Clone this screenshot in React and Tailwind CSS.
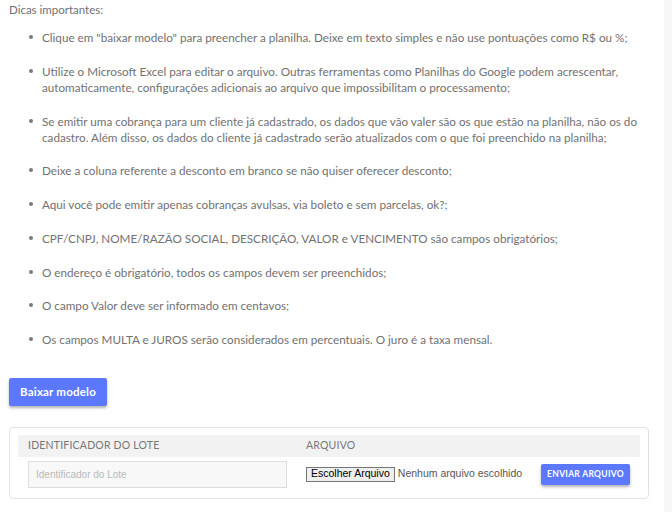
import React from 'react';

const dicas = [
  'Clique em "baixar modelo" para preencher a planilha. Deixe em texto simples e não use pontuações como R$ ou %;',
  'Utilize o Microsoft Excel para editar o arquivo. Outras ferramentas como Planilhas do Google podem acrescentar, automaticamente, configurações adicionais ao arquivo que impossibilitam o processamento;',
  'Se emitir uma cobrança para um cliente já cadastrado, os dados que vão valer são os que estão na planilha, não os do cadastro. Além disso, os dados do cliente já cadastrado serão atualizados com o que foi preenchido na planilha;',
  'Deixe a coluna referente a desconto em branco se não quiser oferecer desconto;',
  'Aqui você pode emitir apenas cobranças avulsas, via boleto e sem parcelas, ok?;',
  'CPF/CNPJ, NOME/RAZÃO SOCIAL, DESCRIÇÃO, VALOR e VENCIMENTO são campos obrigatórios;',
  'O endereço é obrigatório, todos os campos devem ser preenchidos;',
  'O campo Valor deve ser informado em centavos;',
  'Os campos MULTA e JUROS serão considerados em percentuais. O juro é a taxa mensal.',
];

const App = () => {
  return (
    <div className="flex min-h-[512px] bg-white font-['Lato',sans-serif] text-[#717171]">
      <div className="flex-1 pl-[9px] pr-[16px] pt-[2px]">
        {/* Dicas */}
        <p className="text-[11.5px] leading-4">Dicas importantes:</p>
        <ul className="mt-[11px] flex flex-col gap-[17.75px] pl-[33px] text-[11.7px] leading-4">
          {dicas.map((d, i) => (
            <li key={i} className="relative">
              <span className="absolute -left-[13px] top-[6px] h-[4px] w-[4px] rounded-full bg-[#7a7a7a]"></span>
              {d}
            </li>
          ))}
        </ul>

        <button className="mt-[31px] h-[28px] w-[98px] rounded-[2px] bg-[#5b78ff] text-[11.5px] font-bold tracking-[0.2px] text-white shadow-[0_2px_3px_rgba(0,0,0,0.3)]">
          Baixar modelo
        </button>

        {/* Upload */}
        <div className="mt-[21px] mr-[-1px] rounded-[4px] border border-[#e2e2e2] px-[8px] pt-[7px] pb-[10px]">
          <div className="grid grid-cols-[278px_1fr] bg-[#f2f2f2] h-[22px] items-center text-[10.5px] tracking-[0.2px] text-[#777]">
            <span className="pl-[10px]">IDENTIFICADOR DO LOTE</span>
            <span className="pl-[10px]">ARQUIVO</span>
          </div>
          <div className="grid grid-cols-[278px_1fr] pt-[3px]">
            <div className="pl-[10px] pr-[9px]">
              <input
                placeholder="Identificador do Lote"
                className="h-[27px] w-full border border-[#dcdcdc] bg-[#f8f8f8] px-[7px] font-['Liberation_Sans',sans-serif] text-[10px] placeholder:text-[#b8b8b8] outline-none"
              />
            </div>
            <div className="flex items-center pl-[10px] pr-[10px]">
              <span className="flex h-[15px] items-center border border-[#777] bg-[#efefef] px-[4px] font-['Liberation_Sans',sans-serif] text-[10.5px] text-black">
                Escolher Arquivo
              </span>
              <span className="ml-[3px] font-['Liberation_Sans',sans-serif] text-[10.5px] text-[#555]">
                Nenhum arquivo escolhido
              </span>
              <button className="ml-auto h-[21px] w-[89px] rounded-[2px] bg-[#5b78ff] text-[8.5px] font-bold tracking-[0.3px] text-white shadow-[0_2px_3px_rgba(0,0,0,0.3)]">
                ENVIAR ARQUIVO
              </button>
            </div>
          </div>
        </div>
      </div>
      <div className="w-[8px] bg-[#f7f7f8]"></div>
    </div>
  );
};

export default App;
